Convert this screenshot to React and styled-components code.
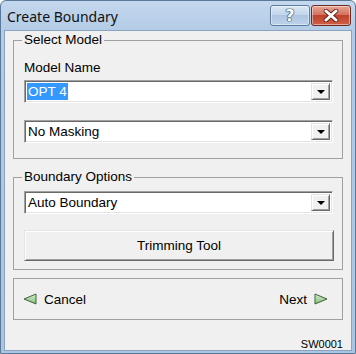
import React from 'react';
import styled, { createGlobalStyle } from 'styled-components';

const Global = createGlobalStyle`
  html, body {
    margin: 0;
    padding: 0;
    width: 356px;
    height: 354px;
    overflow: hidden;
    background: #ffffff;
  }
`;

const Window = styled.div`
  box-sizing: border-box;
  width: 356px;
  height: 354px;
  display: flex;
  flex-direction: column;
  padding: 0 3px 2px 3px;
  border: 1px solid #5a7897;
  border-radius: 6px 6px 0 0;
  background: linear-gradient(#c4d8ee, #b3cbe6 30px, #aac4e2);
  font-family: "Liberation Sans", Arial, sans-serif;
`;

const TitleBar = styled.div`
  height: 29px;
  display: flex;
  align-items: center;
  padding-left: 3px;
`;

const Title = styled.div`
  flex: 1;
  font-family: "Noto Sans", "Open Sans", sans-serif;
  font-size: 14px;
  color: #101010;
  padding-top: 1px;
`;

const Caps = styled.div`
  display: flex;
  gap: 1px;
  align-self: flex-start;
  margin-top: 4px;
  margin-right: 1px;
`;

const CapButton = styled.div`
  box-sizing: border-box;
  width: ${(p) => p.$w}px;
  height: 21px;
  border: 1px solid ${(p) => (p.$red ? '#6b2a22' : '#5f7c9c')};
  border-radius: 3px;
  display: flex;
  align-items: center;
  justify-content: center;
  background: ${(p) =>
    p.$red
      ? 'linear-gradient(#e8a796, #d4735f 45%, #c0422c 50%, #cf5e45)'
      : 'linear-gradient(#dbe7f4, #c3d6ec 45%, #aec6e2 50%, #bcd2ea)'};
  box-shadow: inset 0 0 0 1px rgba(255, 255, 255, 0.45);
`;

const HelpMark = styled.span`
  font-family: "DejaVu Sans", sans-serif;
  font-weight: bold;
  font-size: 16px;
  color: #ffffff;
  line-height: 1;
  text-shadow: 0 0 1px #2e4868, 0 0 1px #2e4868, 0 0 1px #2e4868, 0 0 1px #2e4868;
`;

const Client = styled.div`
  flex: 1;
  display: flex;
  flex-direction: column;
  background: #f0f0f0;
  border: 1px solid #8aa3bf;
  padding: 9px 8px 0 8px;
  color: #000000;
  font-size: 13.5px;
`;

const Group = styled.div`
  position: relative;
  box-sizing: border-box;
  height: ${(p) => p.$h}px;
  margin-top: ${(p) => p.$mt || 0}px;
  border: 1px solid #a0a0a0;
  padding: ${(p) => p.$pad};
  display: flex;
  flex-direction: column;
`;

const Caption = styled.span`
  position: absolute;
  top: -9px;
  left: 8px;
  padding: 0 2px;
  line-height: 16px;
  background: #f0f0f0;
`;

const Label = styled.div`
  line-height: 16px;
  margin-bottom: 4px;
`;

const Combo = styled.div`
  box-sizing: border-box;
  width: 309px;
  height: 23px;
  margin-top: ${(p) => p.$mt || 0}px;
  display: flex;
  align-items: center;
  background: #ffffff;
  border-top: 1px solid #a0a0a0;
  border-left: 1px solid #a0a0a0;
  border-right: 1px solid #ffffff;
  border-bottom: 1px solid #ffffff;
  box-shadow: inset 1px 1px 0 #696969, inset -1px -1px 0 #e3e3e3;
  padding: 2px;
`;

const ComboText = styled.span`
  flex: 1;
  display: flex;
  align-items: center;
  height: 100%;
`;

const Selected = styled.span`
  background: #3399ff;
  color: #ffffff;
  height: 100%;
  display: flex;
  align-items: center;
  padding: 0 1px;
`;

const Plain = styled.span`
  padding-left: 1px;
`;

const DropButton = styled.div`
  box-sizing: border-box;
  width: 19px;
  height: 100%;
  background: #f0f0f0;
  border-top: 1px solid #e3e3e3;
  border-left: 1px solid #e3e3e3;
  border-right: 1px solid #696969;
  border-bottom: 1px solid #696969;
  box-shadow: inset 1px 1px 0 #ffffff, inset -1px -1px 0 #a0a0a0;
  display: flex;
  align-items: center;
  justify-content: center;
`;

const Arrow = styled.span`
  width: 0;
  height: 0;
  border-left: 4px solid transparent;
  border-right: 4px solid transparent;
  border-top: 4px solid #000000;
  margin-top: 1px;
`;

const PushButton = styled.div`
  box-sizing: border-box;
  width: 310px;
  height: 31px;
  margin-top: 16px;
  display: flex;
  align-items: center;
  justify-content: center;
  background: #f0f0f0;
  border-top: 1px solid #e3e3e3;
  border-left: 1px solid #e3e3e3;
  border-right: 1px solid #696969;
  border-bottom: 1px solid #696969;
  box-shadow: inset 1px 1px 0 #ffffff, inset -1px -1px 0 #a0a0a0;
`;

const NavRow = styled.div`
  display: flex;
  align-items: center;
  justify-content: space-between;
  height: 100%;
`;

const NavItem = styled.div`
  display: flex;
  align-items: center;
  gap: 7px;
`;

const Footer = styled.div`
  margin-top: 18px;
  align-self: flex-end;
  font-size: 11px;
`;

const ComboBox = ({ children, mt }) => (
  <Combo $mt={mt}>
    <ComboText>{children}</ComboText>
    <DropButton>
      <Arrow />
    </DropButton>
  </Combo>
);

const GreenArrow = ({ dir }) => (
  <svg width="14" height="12" viewBox="0 0 14 12">
    <defs>
      <linearGradient id={`g-${dir}`} x1="0" y1="0" x2="0" y2="1">
        <stop offset="0" stopColor="#d6eccf" />
        <stop offset="1" stopColor="#7fbf72" />
      </linearGradient>
    </defs>
    <polygon
      points={dir === 'left' ? '1,6 13,1 13,11' : '13,6 1,1 1,11'}
      fill={`url(#g-${dir})`}
      stroke="#40603c"
      strokeWidth="1"
      strokeLinejoin="round"
    />
  </svg>
);

export default function App() {
  return (
    <>
      <Global />
      <Window>
        <TitleBar>
          <Title>Create Boundary</Title>
          <Caps>
            <CapButton $w={40}>
              <HelpMark>?</HelpMark>
            </CapButton>
            <CapButton $w={40} $red>
              <svg width="16" height="13" viewBox="0 0 16 13">
                <path
                  d="M3 2 L13 11 M13 2 L3 11"
                  stroke="#5a1d14"
                  strokeWidth="4.6"
                  strokeLinecap="round"
                />
                <path
                  d="M3 2 L13 11 M13 2 L3 11"
                  stroke="#ffffff"
                  strokeWidth="3"
                  strokeLinecap="round"
                />
              </svg>
            </CapButton>
          </Caps>
        </TitleBar>
        <Client>
          <Group $h={119} $pad="19px 9px 0 10px">
            <Caption>Select Model</Caption>
            <Label>Model Name</Label>
            <ComboBox>
              <Selected>OPT 4</Selected>
            </ComboBox>
            <ComboBox mt={17}>
              <Plain>No Masking</Plain>
            </ComboBox>
          </Group>
          <Group $h={93} $mt={18} $pad="13px 9px 0 10px">
            <Caption>Boundary Options</Caption>
            <ComboBox>
              <Plain>Auto Boundary</Plain>
            </ComboBox>
            <PushButton>Trimming Tool</PushButton>
          </Group>
          <Group $h={42} $mt={8} $pad="0 14px 0 9px">
            <NavRow>
              <NavItem>
                <GreenArrow dir="left" />
                <span>Cancel</span>
              </NavItem>
              <NavItem>
                <span>Next</span>
                <GreenArrow dir="right" />
              </NavItem>
            </NavRow>
          </Group>
          <Footer>SW0001</Footer>
        </Client>
      </Window>
    </>
  );
}
